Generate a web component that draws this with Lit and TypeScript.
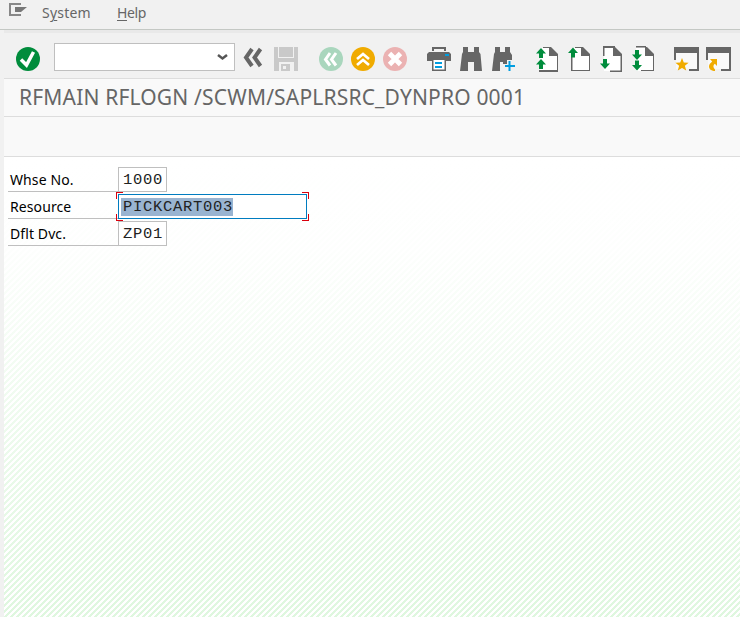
import { LitElement, html, svg, css } from "lit";
import { customElement } from "lit/decorators.js";

const G = "#666", GR = "#008c3c", OR = "#f0ab00", BL = "#009de0";

const up = (y: number) => svg`<path d=${`M6 ${y}l5 5.500H8v4.500H4v-4.500H1z`} fill=${GR}/>`;
const down = (y: number) => svg`<path d=${`M4 ${y}h4v4.500h3l-5 5.500-5-5.500h3z`} fill=${GR}/>`;
const sheet = (frame: unknown, arrows: unknown) => svg`
  <path d="M5 1h10l7 7v16H5z" fill="#fff"/>${frame}
  <path d="M14 0h2l7 7v2h-9z" fill=${G}/>${arrows}`;
const frameWindow = svg`
  <path d="M1 5h23v18H1z" fill="#f9f9f9"/>
  <path d="M0 0h25v24H15v-2h8V6H2v7H0z" fill=${G}/>
  <path d="M2 13H0v11h15v-2H2z" fill="#f1f1f1"/>`;
const binoculars = svg`<path d="M4 0h5v5h6V0h5v5l1.500 2L23 24h-8v-9H9v9H1L3 7l1-2z" fill=${G}/>`;

const icons: Record<string, unknown> = {
  ok: svg`<circle cx="12" cy="12" r="12" fill=${GR}/><path d="M5 12.500l5.500 5.500L17.500 5" fill="none" stroke="#fff" stroke-width="3.500"/>`,
  rewind: svg`<path d="M11 2L5 10.500l6 8.500M19.500 2l-6 8.500 6 8.500" fill="none" stroke=${G} stroke-width="4"/>`,
  save: svg`<path d="M0 0h24v24H0z" fill="#c9c9c9"/><path d="M4 0h1v10h14V0h1v11H4zM5 15h15v9H5z" fill="#f1f1f1"/><path d="M7 17h9v7H7z" fill="#c9c9c9"/><path d="M9 19h3v3H9z" fill="#f1f1f1"/>`,
  back: svg`<circle cx="12" cy="12" r="12" fill="#a9d6bd"/><path d="M11 6L6.500 12.500 11 18.500M17 6l-4.500 6.500 4.500 6" fill="none" stroke="#fff" stroke-width="3"/>`,
  exit: svg`<circle cx="12" cy="12" r="12" fill=${OR}/><path d="M6 12l6-5 6 5M6 18l6-5 6 5" fill="none" stroke="#fff" stroke-width="2.700"/>`,
  cancel: svg`<circle cx="12" cy="12" r="12" fill="#ebb2b2"/><path d="M6.500 6.500l11 11M17.500 6.500l-11 11" fill="none" stroke="#fff" stroke-width="4.800"/>`,
  print: svg`<path d="M5 0h14v4h-2V2H7v2H5z" fill=${G}/><path d="M2 5h20l2 2v7h-5v-1H5v1H0V7z" fill=${G}/><path d="M6 13h12v10H6z" fill="#fff"/><path d="M5 13h1.500v9.500h11V13H19v11H5z" fill=${G}/><path d="M18 7h4v2h-4zM8 15h7v2H8zM8 19h7v2H8z" fill=${BL}/>`,
  find: binoculars,
  findNext: svg`<path d="M4 0h5v5h5V0h5v5l2 3v5h-5v4h-4v-2H9v9H1L3 7l1-2z" fill=${G}/><path d="M17.500 14h2v4h4.500v2h-4.500v4h-2v-4H14v-2h3.500z" fill=${BL}/>`,
  first: sheet(svg`<path d="M8 0h7v1H8zM22 8h1v16h-1z" fill=${G}/><path d="M4 23h19v2H4z" fill=${G}/>`, [up(1), up(12)]),
  prev: sheet(svg`<path d="M8 0h7v1H8zM22 8h1v16h-1zM4 10h1.500v13H22v1H4z" fill=${G}/>`, up(0.5)),
  next: sheet(svg`<path d="M4-1h12v2H5.500v8H4zM21.500 8H23v17H11v-1.500h10.500z" fill=${G}/>`, down(12)),
  last: sheet(svg`<path d="M5-1h10v1.500H5zM22 8h1v16H10v-1h12z" fill=${G}/>`, [down(3), down(13.5)]),
  session: svg`${frameWindow}<path d="M8 11l1.800 4.500 4.800.2-3.700 3.100 1.300 4.800L8 21l-4.200 2.600 1.300-4.800-3.700-3.100 4.800-.2z" fill=${OR}/>`,
  shortcut: svg`${frameWindow}<path d="M4 12h7v7l-2.200-2.200c-2 1.500-1.800 3.700.2 5.700v1.500c-3 0-6-1.500-6-4.500 0-2 1.400-3.500 3.200-5z" fill=${OR}/>`,
};

@customElement("sap-icon")
class SapIcon extends LitElement {
  static properties = { name: {} };
  declare name: string;
  static styles = css`:host{display:block;width:24px;height:24px;flex:none}svg{display:block;overflow:visible}`;
  render() { return html`<svg width="24" height="24" viewBox="0 0 24 24">${icons[this.name]}</svg>`; }
}

const groups = [
  ["back", "exit", "cancel"],
  ["print", "find", "findNext"],
  ["first", "prev", "next", "last"],
  ["session", "shortcut"],
];

@customElement("app-root")
export class AppRoot extends LitElement {
  static styles = css`
    :host{display:flex;flex-direction:column;width:740px;height:617px;overflow:hidden;background:#f1f1f1;font-family:"Noto Sans",sans-serif;color:#666;box-sizing:border-box}
    *{box-sizing:border-box}
    .menu{height:30px;flex:none;display:flex;padding-left:9px;border-bottom:1px solid #c4c8c4;font-size:14px;line-height:26px;white-space:nowrap;letter-spacing:.2px}
    .menu svg{margin-top:3px;width:18px;height:13px}
    .item{margin-left:15px;width:49px}
    .item + .item{margin-left:26px;letter-spacing:-.4px}
    u{text-underline-offset:2px;text-decoration-thickness:1px}
    .body{flex:1;margin-left:4px;display:flex;flex-direction:column;min-height:0}
    .tools{height:49px;flex:none;display:flex;align-items:flex-start;padding:14px 0 0 12px;border-top:3px solid #e9e9e9;border-bottom:1px solid #ddd}
    .combo{width:181px;height:28px;margin:-4px 0 0 14px;background:#fff;border:1px solid #bfbfbf;display:flex;justify-content:flex-end;align-items:center;padding-right:6px}
    .rewind{margin-left:6px}
    .save{margin-left:9px}
    .group{display:flex;gap:8px;margin-left:20px}
    .first{margin-left:21px}
    .last{margin-left:19px}
    .title{height:38px;flex:none;background:#f9f9f9;border-bottom:1px solid #ddd;padding-left:15px;font-size:21px;line-height:36px;letter-spacing:.175px;white-space:nowrap}
    .bar{height:40px;flex:none;background:#f9f9f9;border-bottom:1px solid #ddd}
    .work{flex:1;padding:10px 0 0 4px;background:linear-gradient(#fff 0%,#fffffff0 20%,#ffffff80 55%,#ffffff00 100%),repeating-linear-gradient(135deg,#fff 0 2.121px,#dff7df 2.121px 4.243px);color:#000;font-size:14px}
    .row{display:flex;height:27px;align-items:flex-start}
    .label{width:110px;height:25px;line-height:26px;padding-left:2px;border-bottom:1px solid #bfbfbf;white-space:nowrap;letter-spacing:.1px}
    .field{height:25px;width:49px;background:#fff;border:1px solid #bfbfbf;padding-left:4px;font:15.5px/25px "Liberation Mono",monospace;letter-spacing:.7px;color:#222;white-space:nowrap}
    .active{position:relative;width:189px;border-color:#007cc0;padding-left:2px}
    .sel{display:block;width:112px;height:18px;margin-top:3px;padding-left:2px;line-height:19px;background:#99b4d1}
    .corner{position:absolute;width:7px;height:7px;border:0 solid #d9000d}
    .tl{top:-3px;left:-3px;border-width:1px 0 0 1px}.tr{top:-3px;right:-3px;border-width:1px 1px 0 0}
    .bl{bottom:-3px;left:-3px;border-width:0 0 1px 1px}.br{bottom:-3px;right:-3px;border-width:0 1px 1px 0}
  `;
  render() {
    return html`
      <div class="menu">
        <svg viewBox="0 0 18 13"><path d="M12 1H1v11h11" fill="none" stroke="#888" stroke-width="2"/><path d="M6 4h12l-6 5H6z" fill="#777"/></svg>
        <span class="item">S<u>y</u>stem</span><span class="item"><u>H</u>elp</span>
      </div>
      <div class="body">
        <div class="tools">
          <sap-icon name="ok"></sap-icon>
          <div class="combo"><svg width="11" height="7"><path d="M1 1l4.500 3.500L10 1" fill="none" stroke="#555" stroke-width="2.500"/></svg></div>
          <sap-icon class="rewind" name="rewind"></sap-icon>
          <sap-icon class="save" name="save"></sap-icon>
          ${groups.map((g, i) => html`<div class="group ${i === 0 ? "first" : i === 3 ? "last" : ""}">${g.map((n) => html`<sap-icon .name=${n}></sap-icon>`)}</div>`)}
        </div>
        <div class="title">RFMAIN RFLOGN /SCWM/SAPLRSRC_DYNPRO 0001</div>
        <div class="bar"></div>
        <div class="work">
          <div class="row"><div class="label">Whse No.</div><div class="field">1000</div></div>
          <div class="row"><div class="label">Resource</div><div class="field active"><span class="sel">PICKCART003</span><i class="corner tl"></i><i class="corner tr"></i><i class="corner bl"></i><i class="corner br"></i></div></div>
          <div class="row"><div class="label">Dflt Dvc.</div><div class="field">ZP01</div></div>
        </div>
      </div>`;
  }
}
